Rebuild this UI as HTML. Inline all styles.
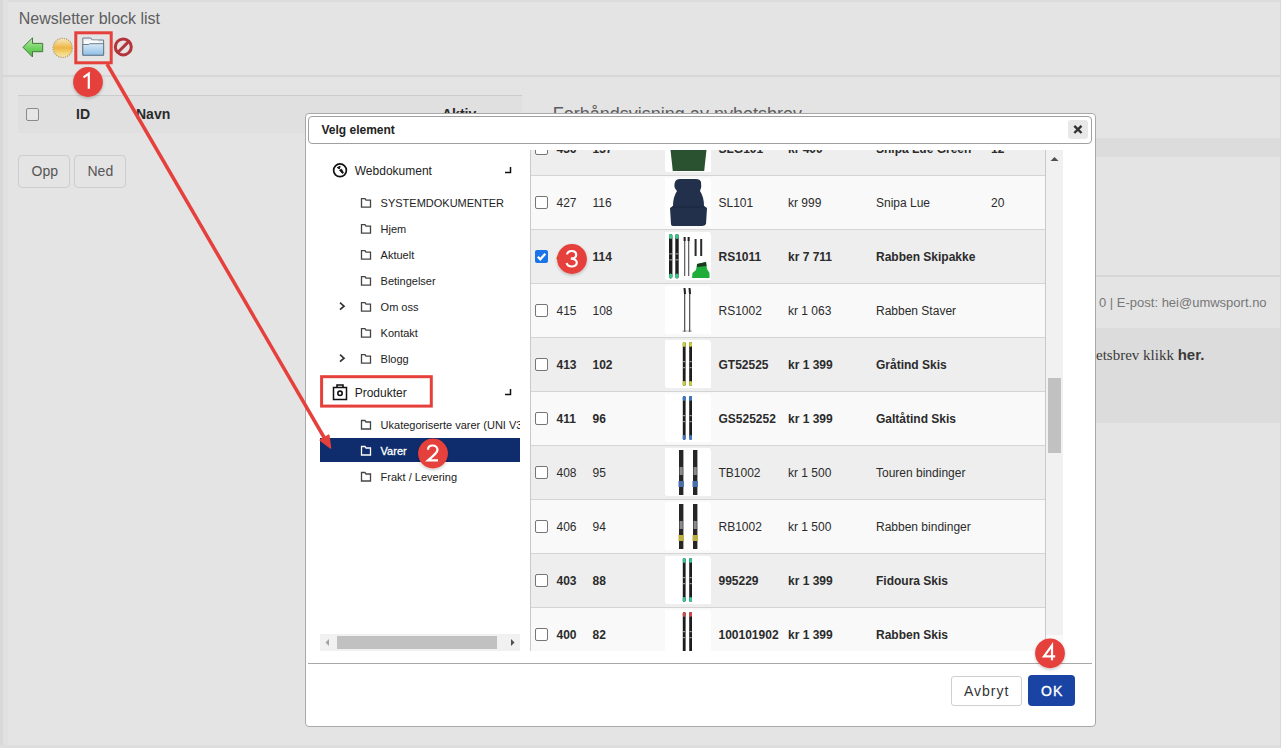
<!DOCTYPE html>
<html><head><meta charset="utf-8">
<style>
*{margin:0;padding:0;box-sizing:border-box}
html,body{width:1281px;height:748px;overflow:hidden}
body{position:relative;background:#e4e4e4;font-family:"Liberation Sans",sans-serif;color:#333}
.a{position:absolute;white-space:nowrap}
.t{position:absolute;white-space:nowrap;line-height:1}
svg{position:absolute;overflow:visible}
</style></head><body>
<div class="a" style="left:0px;top:0px;width:1281px;height:2px;background:#dcdcdc"></div>
<div class="a" style="left:0px;top:0px;width:3px;height:748px;background:#d9d9d9"></div>
<div class="a" style="left:3px;top:0px;width:5px;height:748px;background:#e1e1e1"></div>
<div class="a" style="left:0px;top:745px;width:1281px;height:3px;background:#dedede"></div>
<div class="t" style="left:18.7px;top:10.76px;font-size:16px;color:#5e5e5e">Newsletter block list</div>
<svg style="left:0;top:0" width="150" height="70">
<defs>
<linearGradient id="gA" x1="0" y1="0" x2="0" y2="1"><stop offset="0" stop-color="#c2e8b4"/><stop offset="0.55" stop-color="#6fd35f"/><stop offset="1" stop-color="#4fb843"/></linearGradient>
<linearGradient id="gS" x1="0" y1="0" x2="0" y2="1"><stop offset="0" stop-color="#f6ecc0"/><stop offset="0.5" stop-color="#efb444"/><stop offset="0.75" stop-color="#f2d577"/><stop offset="1" stop-color="#f4e6b2"/></linearGradient>
<linearGradient id="gF" x1="0" y1="0" x2="0" y2="1"><stop offset="0" stop-color="#d9e9f4"/><stop offset="1" stop-color="#8fbfe8"/></linearGradient>
</defs>
<path d="M23 47.3 L32.5 37.8 L32.5 43.4 L42.7 43.4 L42.7 51.7 L32.5 51.7 L32.5 57 Z" fill="url(#gA)" stroke="#3f7a3a" stroke-width="1"/>
<circle cx="62.7" cy="47.9" r="9.6" fill="url(#gS)" stroke="#b7a070" stroke-width="1.2" stroke-dasharray="1.3 1"/>
<path d="M82.8 38 h8 l1.5 2 h11.3 v15.2 h-20.8 z" fill="#e8eef3" stroke="#6a7a88" stroke-width="1"/>
<path d="M84 40.5 h14 l2 3 h3 v1 h-19 z" fill="#fafafa"/>
<path d="M82.8 44.5 h6 l1 -0.8 h13.8 v11.5 h-20.8 z" fill="url(#gF)" stroke="#5d7386" stroke-width="0.9"/>
<circle cx="123.3" cy="46.9" r="8" fill="none" stroke="#b3353b" stroke-width="3"/>
<path d="M118 52.3 L128.6 41.6" stroke="#b3353b" stroke-width="3"/>
</svg>
<div class="a" style="left:0px;top:75px;width:1281px;height:2px;background:#d7d7d7"></div>
<div class="a" style="left:18px;top:95px;width:504px;height:38px;background:#e0e0e0;border-top:1px solid #cccccc"></div>
<div class="a" style="left:26px;top:108px;width:13px;height:13px;border:1px solid #8a8a8a;border-radius:2px;background:#e6e6e6"></div>
<div class="t" style="left:76px;top:107.15px;font-size:14px;font-weight:bold;color:#2a2a2a">ID</div>
<div class="t" style="left:136px;top:107.15px;font-size:14px;font-weight:bold;color:#2a2a2a">Navn</div>
<div class="t" style="left:442px;top:107.15px;font-size:14px;font-weight:bold;color:#2a2a2a">Aktiv</div>
<div class="a" style="left:18px;top:155px;width:52px;height:33px;border:1px solid #cdcdcd;border-radius:4px"></div>
<div class="t" style="left:31.5px;top:163.55px;font-size:14px;color:#555">Opp</div>
<div class="a" style="left:74px;top:155px;width:52px;height:33px;border:1px solid #cdcdcd;border-radius:4px"></div>
<div class="t" style="left:87.5px;top:163.55px;font-size:14px;color:#555">Ned</div>
<div class="t" style="left:552.8px;top:104.66px;font-size:18px;color:#5c5c5c">Forhåndsvisning av nyhetsbrev</div>
<div class="a" style="left:530px;top:138px;width:751px;height:19px;background:#dcdcdc"></div>
<div class="a" style="left:530px;top:275px;width:751px;height:2px;background:#d6d6d6"></div>
<div class="t" style="left:1099px;top:296.40px;font-size:13px;color:#777">0 | E-post: hei@umwsport.no</div>
<div class="a" style="left:530px;top:328px;width:751px;height:95px;background:#dcdcdc"></div>
<div class="t" style="left:1096px;top:347.10px;font-size:15px;font-family:'Liberation Serif',serif;color:#3a3a3a">etsbrev klikk <b style="font-family:'Liberation Sans',sans-serif">her.</b></div>
<div class="a" style="left:1280px;top:0px;width:1px;height:748px;background:#d8d8d8"></div>
<div class="a" style="left:305px;top:113px;width:791px;height:614px;background:#fff;border:1px solid #a9a9a9;border-radius:4px"></div>
<div class="a" style="left:308px;top:116px;width:784px;height:28px;border:1px solid #a0a0a0;border-radius:4px"></div>
<div class="t" style="left:321.5px;top:123.84px;font-size:12px;font-weight:bold;color:#222">Velg element</div>
<div class="a" style="left:1068px;top:120px;width:20px;height:19px;background:#e8e8e8;border-radius:3px"></div>
<svg style="left:1068px;top:120px" width="20" height="19"><path d="M6.3 5.8 L13.5 13 M13.5 5.8 L6.3 13" stroke="#333" stroke-width="2.4" stroke-linecap="butt"/></svg>
<svg style="left:0;top:0" width="530" height="500"><circle cx="340" cy="170.3" r="6.4" fill="none" stroke="#111" stroke-width="1.7"/><path d="M337.2 167.6 L340.2 166.3 L339.4 168.9 Z M339.6 170.2 L341.6 169.2 L343.4 172.8 L342.4 173.4 Z" fill="#111" stroke="#111" stroke-width="0.9" stroke-linejoin="round"/><path d="M505 172.5 H510.5 V167" fill="none" stroke="#111" stroke-width="1.5"/><path d="M505 394.5 H510.5 V389" fill="none" stroke="#111" stroke-width="1.5"/><path d="M361.5 198.7 h3.5 l1 1.5 h4.5 v7 h-9 z" fill="none" stroke="#444" stroke-width="1.3"/><path d="M361.5 224.7 h3.5 l1 1.5 h4.5 v7 h-9 z" fill="none" stroke="#444" stroke-width="1.3"/><path d="M361.5 250.7 h3.5 l1 1.5 h4.5 v7 h-9 z" fill="none" stroke="#444" stroke-width="1.3"/><path d="M361.5 276.7 h3.5 l1 1.5 h4.5 v7 h-9 z" fill="none" stroke="#444" stroke-width="1.3"/><path d="M361.5 302.7 h3.5 l1 1.5 h4.5 v7 h-9 z" fill="none" stroke="#444" stroke-width="1.3"/><path d="M340 302.7 L344 306.2 L340 309.7" fill="none" stroke="#333" stroke-width="1.7"/><path d="M361.5 328.7 h3.5 l1 1.5 h4.5 v7 h-9 z" fill="none" stroke="#444" stroke-width="1.3"/><path d="M361.5 354.7 h3.5 l1 1.5 h4.5 v7 h-9 z" fill="none" stroke="#444" stroke-width="1.3"/><path d="M340 354.7 L344 358.2 L340 361.7" fill="none" stroke="#333" stroke-width="1.7"/><path d="M333.5 387.5 h13 v12 h-13 z" fill="none" stroke="#111" stroke-width="1.5"/><path d="M337 388 v-3 h6 v3" fill="none" stroke="#111" stroke-width="1.6"/><circle cx="340" cy="393.3" r="2.2" fill="none" stroke="#111" stroke-width="1.6"/><rect x="320" y="438" width="200" height="24" fill="#0f2c6c"/><path d="M361.5 420.5 h3.5 l1 1.5 h4.5 v7 h-9 z" fill="none" stroke="#444" stroke-width="1.3"/><path d="M361.5 446.5 h3.5 l1 1.5 h4.5 v7 h-9 z" fill="none" stroke="#fff" stroke-width="1.3"/><path d="M361.5 472.5 h3.5 l1 1.5 h4.5 v7 h-9 z" fill="none" stroke="#444" stroke-width="1.3"/></svg>
<div class="t" style="left:354.75px;top:164.84px;font-size:12px;color:#222">Webdokument</div>
<div class="t" style="left:380.6px;top:197.89px;font-size:11px;color:#222">SYSTEMDOKUMENTER</div>
<div class="t" style="left:380.6px;top:223.89px;font-size:11px;color:#222">Hjem</div>
<div class="t" style="left:380.6px;top:249.89px;font-size:11px;color:#222">Aktuelt</div>
<div class="t" style="left:380.6px;top:275.89px;font-size:11px;color:#222">Betingelser</div>
<div class="t" style="left:380.6px;top:301.89px;font-size:11px;color:#222">Om oss</div>
<div class="t" style="left:380.6px;top:327.89px;font-size:11px;color:#222">Kontakt</div>
<div class="t" style="left:380.6px;top:353.89px;font-size:11px;color:#222">Blogg</div>
<div class="t" style="left:354.7px;top:386.54px;font-size:12px;color:#222">Produkter</div>
<div class="a" style="left:320px;top:410px;width:200px;height:80px;overflow:hidden"><div class="t" style="left:60.6px;top:9.69px;font-size:11px;color:#222">Ukategoriserte varer (UNI V3</div>
<div class="t" style="left:60.6px;top:35.69px;font-size:11px;color:#fff;-webkit-text-stroke:0.3px #fff">Varer</div>
<div class="t" style="left:60.6px;top:61.69px;font-size:11px;color:#222">Frakt / Levering</div>
</div>
<div class="a" style="left:320px;top:634px;width:200px;height:17px;background:#f1f1f1"></div>
<div class="a" style="left:337px;top:636px;width:160px;height:13px;background:#c1c1c1"></div>
<svg style="left:0;top:0" width="530" height="660"><path d="M329 639 L325.5 642.5 L329 646 Z" fill="#a3a3a3"/><path d="M511 639 L514.5 642.5 L511 646 Z" fill="#505050"/></svg>
<div class="a" style="left:530px;top:150px;width:516px;height:501px;overflow:hidden;border-left:1px solid #c9c9c9;border-right:1px solid #c9c9c9"><div class="a" style="left:0;top:-29px;width:516px;height:54px;background:#eeeeee;border-top:1px solid #d4d4d4"><div class="a" style="left:4px;top:20px;width:13px;height:13px;border:1px solid #767676;border-radius:2px;background:#fff"></div>
<div class="t" style="left:25.5px;top:20.64px;font-size:12px;font-weight:bold;color:#2b2b2b">436</div>
<div class="t" style="left:61.5px;top:20.64px;font-size:12px;font-weight:bold;color:#2b2b2b">137</div>
<div class="a" style="left:135px;top:4px;width:45px;height:46px;background:#fff"></div>
<div class="t" style="left:187.5px;top:20.64px;font-size:12px;font-weight:bold;color:#2b2b2b">SLG101</div>
<div class="t" style="left:257px;top:20.64px;font-size:12px;font-weight:bold;color:#2b2b2b">kr 400</div>
<div class="t" style="left:345px;top:20.64px;font-size:12px;font-weight:bold;color:#2b2b2b">Snipa Lue Green</div>
<div class="t" style="left:460px;top:20.64px;font-size:12px;font-weight:bold;color:#2b2b2b">12</div>
</div><div class="a" style="left:0;top:25px;width:516px;height:54px;background:#f9f9f9;border-top:1px solid #d4d4d4"><div class="a" style="left:4px;top:20px;width:13px;height:13px;border:1px solid #767676;border-radius:2px;background:#fff"></div>
<div class="t" style="left:25.5px;top:20.64px;font-size:12px;color:#2b2b2b">427</div>
<div class="t" style="left:61.5px;top:20.64px;font-size:12px;color:#2b2b2b">116</div>
<div class="a" style="left:135px;top:4px;width:45px;height:46px;background:#fff"></div>
<div class="t" style="left:187.5px;top:20.64px;font-size:12px;color:#2b2b2b">SL101</div>
<div class="t" style="left:257px;top:20.64px;font-size:12px;color:#2b2b2b">kr 999</div>
<div class="t" style="left:345px;top:20.64px;font-size:12px;color:#2b2b2b">Snipa Lue</div>
<div class="t" style="left:460px;top:20.64px;font-size:12px;color:#2b2b2b">20</div>
</div><div class="a" style="left:0;top:79px;width:516px;height:54px;background:#eeeeee;border-top:1px solid #d4d4d4"><div class="a" style="left:4px;top:20px;width:13px;height:13px;background:#1a73e8;border-radius:2px"></div>
<svg style="left:4px;top:20px" width="13" height="13"><path d="M2.8 6.8 L5.3 9.3 L10.3 3.8" fill="none" stroke="#fff" stroke-width="2.3"/></svg><div class="t" style="left:25.5px;top:20.64px;font-size:12px;font-weight:bold;color:#2b2b2b">428</div>
<div class="t" style="left:61.5px;top:20.64px;font-size:12px;font-weight:bold;color:#2b2b2b">114</div>
<div class="a" style="left:135px;top:4px;width:45px;height:46px;background:#fff"></div>
<div class="t" style="left:187.5px;top:20.64px;font-size:12px;font-weight:bold;color:#2b2b2b">RS1011</div>
<div class="t" style="left:257px;top:20.64px;font-size:12px;font-weight:bold;color:#2b2b2b">kr 7 711</div>
<div class="t" style="left:345px;top:20.64px;font-size:12px;font-weight:bold;color:#2b2b2b">Rabben Skipakke</div>
<div class="t" style="left:460px;top:20.64px;font-size:12px;font-weight:bold;color:#2b2b2b"></div>
</div><div class="a" style="left:0;top:133px;width:516px;height:54px;background:#f9f9f9;border-top:1px solid #d4d4d4"><div class="a" style="left:4px;top:20px;width:13px;height:13px;border:1px solid #767676;border-radius:2px;background:#fff"></div>
<div class="t" style="left:25.5px;top:20.64px;font-size:12px;color:#2b2b2b">415</div>
<div class="t" style="left:61.5px;top:20.64px;font-size:12px;color:#2b2b2b">108</div>
<div class="a" style="left:135px;top:4px;width:45px;height:46px;background:#fff"></div>
<div class="t" style="left:187.5px;top:20.64px;font-size:12px;color:#2b2b2b">RS1002</div>
<div class="t" style="left:257px;top:20.64px;font-size:12px;color:#2b2b2b">kr 1 063</div>
<div class="t" style="left:345px;top:20.64px;font-size:12px;color:#2b2b2b">Rabben Staver</div>
<div class="t" style="left:460px;top:20.64px;font-size:12px;color:#2b2b2b"></div>
</div><div class="a" style="left:0;top:187px;width:516px;height:54px;background:#eeeeee;border-top:1px solid #d4d4d4"><div class="a" style="left:4px;top:20px;width:13px;height:13px;border:1px solid #767676;border-radius:2px;background:#fff"></div>
<div class="t" style="left:25.5px;top:20.64px;font-size:12px;font-weight:bold;color:#2b2b2b">413</div>
<div class="t" style="left:61.5px;top:20.64px;font-size:12px;font-weight:bold;color:#2b2b2b">102</div>
<div class="a" style="left:135px;top:4px;width:45px;height:46px;background:#fff"></div>
<div class="t" style="left:187.5px;top:20.64px;font-size:12px;font-weight:bold;color:#2b2b2b">GT52525</div>
<div class="t" style="left:257px;top:20.64px;font-size:12px;font-weight:bold;color:#2b2b2b">kr 1 399</div>
<div class="t" style="left:345px;top:20.64px;font-size:12px;font-weight:bold;color:#2b2b2b">Gråtind Skis</div>
<div class="t" style="left:460px;top:20.64px;font-size:12px;font-weight:bold;color:#2b2b2b"></div>
</div><div class="a" style="left:0;top:241px;width:516px;height:54px;background:#f9f9f9;border-top:1px solid #d4d4d4"><div class="a" style="left:4px;top:20px;width:13px;height:13px;border:1px solid #767676;border-radius:2px;background:#fff"></div>
<div class="t" style="left:25.5px;top:20.64px;font-size:12px;font-weight:bold;color:#2b2b2b">411</div>
<div class="t" style="left:61.5px;top:20.64px;font-size:12px;font-weight:bold;color:#2b2b2b">96</div>
<div class="a" style="left:135px;top:4px;width:45px;height:46px;background:#fff"></div>
<div class="t" style="left:187.5px;top:20.64px;font-size:12px;font-weight:bold;color:#2b2b2b">GS525252</div>
<div class="t" style="left:257px;top:20.64px;font-size:12px;font-weight:bold;color:#2b2b2b">kr 1 399</div>
<div class="t" style="left:345px;top:20.64px;font-size:12px;font-weight:bold;color:#2b2b2b">Galtåtind Skis</div>
<div class="t" style="left:460px;top:20.64px;font-size:12px;font-weight:bold;color:#2b2b2b"></div>
</div><div class="a" style="left:0;top:295px;width:516px;height:54px;background:#eeeeee;border-top:1px solid #d4d4d4"><div class="a" style="left:4px;top:20px;width:13px;height:13px;border:1px solid #767676;border-radius:2px;background:#fff"></div>
<div class="t" style="left:25.5px;top:20.64px;font-size:12px;color:#2b2b2b">408</div>
<div class="t" style="left:61.5px;top:20.64px;font-size:12px;color:#2b2b2b">95</div>
<div class="a" style="left:135px;top:4px;width:45px;height:46px;background:#fff"></div>
<div class="t" style="left:187.5px;top:20.64px;font-size:12px;color:#2b2b2b">TB1002</div>
<div class="t" style="left:257px;top:20.64px;font-size:12px;color:#2b2b2b">kr 1 500</div>
<div class="t" style="left:345px;top:20.64px;font-size:12px;color:#2b2b2b">Touren bindinger</div>
<div class="t" style="left:460px;top:20.64px;font-size:12px;color:#2b2b2b"></div>
</div><div class="a" style="left:0;top:349px;width:516px;height:54px;background:#f9f9f9;border-top:1px solid #d4d4d4"><div class="a" style="left:4px;top:20px;width:13px;height:13px;border:1px solid #767676;border-radius:2px;background:#fff"></div>
<div class="t" style="left:25.5px;top:20.64px;font-size:12px;color:#2b2b2b">406</div>
<div class="t" style="left:61.5px;top:20.64px;font-size:12px;color:#2b2b2b">94</div>
<div class="a" style="left:135px;top:4px;width:45px;height:46px;background:#fff"></div>
<div class="t" style="left:187.5px;top:20.64px;font-size:12px;color:#2b2b2b">RB1002</div>
<div class="t" style="left:257px;top:20.64px;font-size:12px;color:#2b2b2b">kr 1 500</div>
<div class="t" style="left:345px;top:20.64px;font-size:12px;color:#2b2b2b">Rabben bindinger</div>
<div class="t" style="left:460px;top:20.64px;font-size:12px;color:#2b2b2b"></div>
</div><div class="a" style="left:0;top:403px;width:516px;height:54px;background:#eeeeee;border-top:1px solid #d4d4d4"><div class="a" style="left:4px;top:20px;width:13px;height:13px;border:1px solid #767676;border-radius:2px;background:#fff"></div>
<div class="t" style="left:25.5px;top:20.64px;font-size:12px;font-weight:bold;color:#2b2b2b">403</div>
<div class="t" style="left:61.5px;top:20.64px;font-size:12px;font-weight:bold;color:#2b2b2b">88</div>
<div class="a" style="left:135px;top:4px;width:45px;height:46px;background:#fff"></div>
<div class="t" style="left:187.5px;top:20.64px;font-size:12px;font-weight:bold;color:#2b2b2b">995229</div>
<div class="t" style="left:257px;top:20.64px;font-size:12px;font-weight:bold;color:#2b2b2b">kr 1 399</div>
<div class="t" style="left:345px;top:20.64px;font-size:12px;font-weight:bold;color:#2b2b2b">Fidoura Skis</div>
<div class="t" style="left:460px;top:20.64px;font-size:12px;font-weight:bold;color:#2b2b2b"></div>
</div><div class="a" style="left:0;top:457px;width:516px;height:54px;background:#f9f9f9;border-top:1px solid #d4d4d4"><div class="a" style="left:4px;top:20px;width:13px;height:13px;border:1px solid #767676;border-radius:2px;background:#fff"></div>
<div class="t" style="left:25.5px;top:20.64px;font-size:12px;font-weight:bold;color:#2b2b2b">400</div>
<div class="t" style="left:61.5px;top:20.64px;font-size:12px;font-weight:bold;color:#2b2b2b">82</div>
<div class="a" style="left:135px;top:4px;width:45px;height:46px;background:#fff"></div>
<div class="t" style="left:187.5px;top:20.64px;font-size:12px;font-weight:bold;color:#2b2b2b">100101902</div>
<div class="t" style="left:257px;top:20.64px;font-size:12px;font-weight:bold;color:#2b2b2b">kr 1 399</div>
<div class="t" style="left:345px;top:20.64px;font-size:12px;font-weight:bold;color:#2b2b2b">Rabben Skis</div>
<div class="t" style="left:460px;top:20.64px;font-size:12px;font-weight:bold;color:#2b2b2b"></div>
</div></div>
<div class="a" style="left:1046px;top:150px;width:17px;height:485px;background:#f1f1f1"></div>
<div class="a" style="left:1046px;top:635px;width:17px;height:16px;background:#f9f9f9"></div>
<div class="a" style="left:1048px;top:378px;width:13px;height:75px;background:#c1c1c1"></div>
<svg style="left:0;top:0" width="1100" height="200"><path d="M1050.5 161 L1054.5 157 L1058.5 161 Z" fill="#505050"/></svg>
<div class="a" style="left:308px;top:663px;width:784px;height:1px;background:#a8a8a8"></div>
<div class="a" style="left:951px;top:676px;width:71px;height:30px;background:#fff;border:1px solid #cfcfcf;border-radius:3px"></div>
<div class="t" style="left:964px;top:683.75px;font-size:14px;color:#333;letter-spacing:1px">Avbryt</div>
<div class="a" style="left:1028px;top:675px;width:47px;height:31px;background:#1a44a3;border-radius:4px"></div>
<div class="t" style="left:1041px;top:683.75px;font-size:14px;color:#fff;letter-spacing:1px;-webkit-text-stroke:0.35px #fff">OK</div>
<div class="a" style="left:531px;top:150px;width:515px;height:501px;overflow:hidden"><svg style="left:-531px;top:-150px" width="1281" height="748"><rect x="665" y="124" width="45" height="47" fill="#fff"/><rect x="665" y="178" width="45" height="47" fill="#fff"/><rect x="665" y="232" width="45" height="47" fill="#fff"/><rect x="665" y="286" width="45" height="47" fill="#fff"/><rect x="665" y="340" width="45" height="47" fill="#fff"/><rect x="665" y="394" width="45" height="47" fill="#fff"/><rect x="665" y="448" width="45" height="47" fill="#fff"/><rect x="665" y="502" width="45" height="47" fill="#fff"/><rect x="665" y="556" width="45" height="47" fill="#fff"/><rect x="665" y="610" width="45" height="47" fill="#fff"/><path d="M670.2 147 L706.8 147 L704.2 171 L672.8 171 Z" fill="#2a5230"/><path d="M673 129 Q675 124 688 124 Q701 124 703 129 L706 148 L671 148 Z" fill="#2f5a35"/><path d="M675 182 Q676 179 680 179 L696 179 Q700 179 701 182 Q702 187 700 191 Q704 197 704 206 L707 208 L706 224 Q705 226 702 226 L674 226 Q671 226 671 224 L670 208 L673 206 Q673 197 677 191 Q673 187 675 182 Z" fill="#22304c"/><path d="M672 207 L705 207" stroke="#1a253c" stroke-width="1"/><rect x="669" y="234" width="3.4" height="44.5" rx="1.7" fill="#1d1d1d"/><rect x="669" y="234" width="3.4" height="5" rx="1.7" fill="#3fc38a"/><rect x="669" y="273.5" width="3.4" height="5" rx="1.7" fill="#3fc38a"/><rect x="669.3" y="253.25" width="2.8" height="1.2" fill="#9a9a9a"/><rect x="669.3" y="259.25" width="2.8" height="1.2" fill="#9a9a9a"/><rect x="675.3" y="234" width="3.4" height="44.5" rx="1.7" fill="#1d1d1d"/><rect x="675.3" y="234" width="3.4" height="5" rx="1.7" fill="#3fc38a"/><rect x="675.3" y="273.5" width="3.4" height="5" rx="1.7" fill="#3fc38a"/><rect x="675.5999999999999" y="253.25" width="2.8" height="1.2" fill="#9a9a9a"/><rect x="675.5999999999999" y="259.25" width="2.8" height="1.2" fill="#9a9a9a"/><rect x="684" y="237" width="1.3" height="39" fill="#666"/><rect x="683.6" y="237" width="2" height="4" fill="#222"/><rect x="688" y="237" width="1.3" height="39" fill="#666"/><rect x="687.6" y="237" width="2" height="4" fill="#222"/><rect x="694.6" y="239" width="2" height="17" fill="#2a2a2a"/><rect x="700.2" y="239" width="2" height="17" fill="#2a2a2a"/><path d="M697 264 L706 262 L707 269 L709.5 273 L709.5 278 L692 278 L692.5 273 L696 270 Z" fill="#1fae3a"/><path d="M697 264 L706 262 L706.5 266 L697 267 Z" fill="#1c3a22"/><rect x="684" y="289" width="1.3" height="43" fill="#5a5a5a"/><path d="M683.5 288 L685.5 288 L686 294 L684 294 Z" fill="#222"/><path d="M682.5 331 L686.8 331" stroke="#777" stroke-width="0.8"/><rect x="689" y="289" width="1.3" height="43" fill="#5a5a5a"/><path d="M688.5 288 L690.5 288 L691 294 L689 294 Z" fill="#222"/><path d="M687.5 331 L691.8 331" stroke="#777" stroke-width="0.8"/><rect x="682.8" y="342" width="2.8" height="44" rx="1.4" fill="#1d1d1d"/><rect x="682.8" y="342" width="2.8" height="5" rx="1.4" fill="#c9cf3a"/><rect x="682.8" y="381" width="2.8" height="5" rx="1.4" fill="#c9cf3a"/><rect x="683.0999999999999" y="361.0" width="2.1999999999999997" height="1.2" fill="#9a9a9a"/><rect x="683.0999999999999" y="367.0" width="2.1999999999999997" height="1.2" fill="#9a9a9a"/><rect x="689.2" y="342" width="2.8" height="44" rx="1.4" fill="#1d1d1d"/><rect x="689.2" y="342" width="2.8" height="5" rx="1.4" fill="#c9cf3a"/><rect x="689.2" y="381" width="2.8" height="5" rx="1.4" fill="#c9cf3a"/><rect x="689.5" y="361.0" width="2.1999999999999997" height="1.2" fill="#9a9a9a"/><rect x="689.5" y="367.0" width="2.1999999999999997" height="1.2" fill="#9a9a9a"/><rect x="682.8" y="396" width="2.8" height="44" rx="1.4" fill="#1d1d1d"/><rect x="682.8" y="396" width="2.8" height="5" rx="1.4" fill="#3f78c0"/><rect x="682.8" y="435" width="2.8" height="5" rx="1.4" fill="#3f78c0"/><rect x="683.0999999999999" y="415.0" width="2.1999999999999997" height="1.2" fill="#9a9a9a"/><rect x="683.0999999999999" y="421.0" width="2.1999999999999997" height="1.2" fill="#9a9a9a"/><rect x="689.2" y="396" width="2.8" height="44" rx="1.4" fill="#1d1d1d"/><rect x="689.2" y="396" width="2.8" height="5" rx="1.4" fill="#3f78c0"/><rect x="689.2" y="435" width="2.8" height="5" rx="1.4" fill="#3f78c0"/><rect x="689.5" y="415.0" width="2.1999999999999997" height="1.2" fill="#9a9a9a"/><rect x="689.5" y="421.0" width="2.1999999999999997" height="1.2" fill="#9a9a9a"/><rect x="682.8" y="558" width="2.8" height="44" rx="1.4" fill="#1d1d1d"/><rect x="682.8" y="558" width="2.8" height="5" rx="1.4" fill="#35c497"/><rect x="682.8" y="597" width="2.8" height="5" rx="1.4" fill="#35c497"/><rect x="683.0999999999999" y="577.0" width="2.1999999999999997" height="1.2" fill="#9a9a9a"/><rect x="683.0999999999999" y="583.0" width="2.1999999999999997" height="1.2" fill="#9a9a9a"/><rect x="689.2" y="558" width="2.8" height="44" rx="1.4" fill="#1d1d1d"/><rect x="689.2" y="558" width="2.8" height="5" rx="1.4" fill="#35c497"/><rect x="689.2" y="597" width="2.8" height="5" rx="1.4" fill="#35c497"/><rect x="689.5" y="577.0" width="2.1999999999999997" height="1.2" fill="#9a9a9a"/><rect x="689.5" y="583.0" width="2.1999999999999997" height="1.2" fill="#9a9a9a"/><rect x="682.8" y="612" width="2.8" height="44" rx="1.4" fill="#1d1d1d"/><rect x="682.8" y="612" width="2.8" height="5" rx="1.4" fill="#d04848"/><rect x="682.8" y="651" width="2.8" height="5" rx="1.4" fill="#d04848"/><rect x="683.0999999999999" y="631.0" width="2.1999999999999997" height="1.2" fill="#9a9a9a"/><rect x="683.0999999999999" y="637.0" width="2.1999999999999997" height="1.2" fill="#9a9a9a"/><rect x="689.2" y="612" width="2.8" height="44" rx="1.4" fill="#1d1d1d"/><rect x="689.2" y="612" width="2.8" height="5" rx="1.4" fill="#d04848"/><rect x="689.2" y="651" width="2.8" height="5" rx="1.4" fill="#d04848"/><rect x="689.5" y="631.0" width="2.1999999999999997" height="1.2" fill="#9a9a9a"/><rect x="689.5" y="637.0" width="2.1999999999999997" height="1.2" fill="#9a9a9a"/><rect x="679" y="450" width="4.4" height="45" fill="#262626"/><rect x="679.6" y="467" width="3.2" height="8" fill="#8a8a8a"/><rect x="678.5" y="481" width="5.4" height="6" fill="#4a6fa8"/><rect x="693" y="450" width="4.4" height="45" fill="#262626"/><rect x="693.6" y="467" width="3.2" height="8" fill="#8a8a8a"/><rect x="692.5" y="481" width="5.4" height="6" fill="#4a6fa8"/><rect x="679" y="504" width="4.4" height="45" fill="#262626"/><rect x="679.6" y="521" width="3.2" height="8" fill="#8a8a8a"/><rect x="678.5" y="535" width="5.4" height="6" fill="#b8b040"/><rect x="693" y="504" width="4.4" height="45" fill="#262626"/><rect x="693.6" y="521" width="3.2" height="8" fill="#8a8a8a"/><rect x="692.5" y="535" width="5.4" height="6" fill="#b8b040"/></svg></div>
<svg style="left:0;top:0" width="1281" height="748"><defs><filter id="sh" x="-30%" y="-30%" width="160%" height="160%"><feDropShadow dx="0" dy="1.5" stdDeviation="1.5" flood-color="#000" flood-opacity="0.22"/></filter></defs><rect x="75.8" y="32.8" width="35.4" height="30" fill="none" stroke="#e5403b" stroke-width="3"/><rect x="321.6" y="376.7" width="109.7" height="29.4" fill="none" stroke="#e5403b" stroke-width="3"/><line x1="107" y1="64" x2="325" y2="439" stroke="#e5403b" stroke-width="3.5"/><path d="M330.5 448 L320.2 440.1 L328.8 435.1 Z" fill="#e5403b" stroke="#e5403b" stroke-width="1.5" stroke-linejoin="round"/><circle cx="88" cy="82" r="14.9" fill="#e5403b" filter="url(#sh)"/><path transform="translate(88 82)" d="M-4.5 -4.6 L0.8 -8.3 L0.8 6.8" fill="none" stroke="#fff" stroke-width="2.2" stroke-linejoin="miter"/><circle cx="433" cy="453.5" r="14.9" fill="#e5403b" filter="url(#sh)"/><path transform="translate(433 453.5)" d="M-5 -3.8 C-5 -6.5 -3 -8 -0.3 -8 C2.5 -8 4.5 -6.2 4.5 -3.8 C4.5 -1.5 2.5 0.5 -5 6.9 L5 6.9" fill="none" stroke="#fff" stroke-width="2.2" stroke-linejoin="miter"/><circle cx="572" cy="259" r="14.9" fill="#e5403b" filter="url(#sh)"/><path transform="translate(572 259)" d="M-5 -4.6 C-4.5 -7 -2.5 -8 -0.3 -8 C2.5 -8 4.2 -6.3 4.2 -4 C4.2 -1.6 2.3 -0.4 -1.2 -0.4 C2.8 -0.4 4.8 1.5 4.8 3.6 C4.8 6 2.6 7.5 -0.2 7.5 C-3 7.5 -4.8 6.2 -5.3 4" fill="none" stroke="#fff" stroke-width="2.2" stroke-linejoin="miter"/><circle cx="1050" cy="653.3" r="14.9" fill="#e5403b" filter="url(#sh)"/><path transform="translate(1050 653.3)" d="M2 6.9 L2 -8 L-6 3 L5.2 3" fill="none" stroke="#fff" stroke-width="2.2" stroke-linejoin="miter"/></svg>
</body></html>
